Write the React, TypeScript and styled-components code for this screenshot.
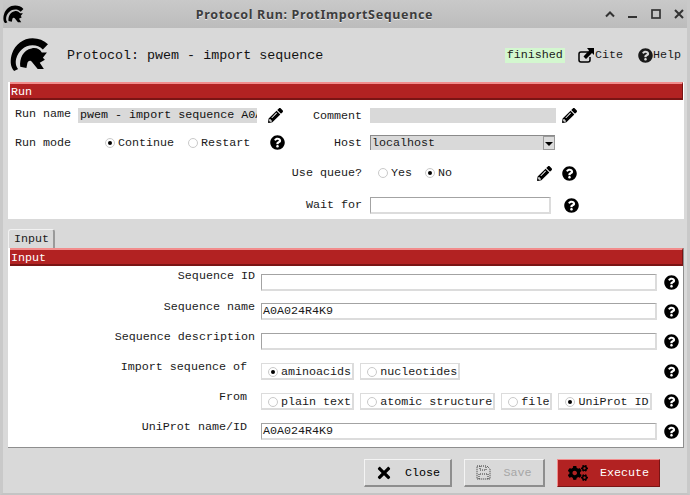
import React from 'react'
import styled, { createGlobalStyle } from 'styled-components'
import { FaCogs, FaPencilAlt, FaQuestionCircle, FaTimes } from 'react-icons/fa'

const mono = `'Liberation Mono', 'DejaVu Sans Mono', monospace`

const GlobalStyle = createGlobalStyle`
  html, body { margin: 0; padding: 0; background: #d9d9d9; }
  * { box-sizing: border-box; }
`

const Helmet = ({ size = 38 }: { size?: number }) => (
  <svg width={size} height={size * 0.9} viewBox='0 0 38 34'>
    <path
      fill='#000'
      d='M4 33 C0 29 0 22 2 16 C5 7 13 1 22 1 C28 1 33 3 37 7 L32 12 C29 9 26 8 22 8 C14 8 8 14 6 21 C5 25 6 29 8 31 Z'
    />
    <path
      fill='#000'
      d='M10 29 C9 21 13 12 21 11 C26 10 29 12 31 15 L36 15 L32 20 L34 22 L29 25 L33 31 L27 31 L22 25 C20 22 18 23 17 25 L16 30 Z'
    />
  </svg>
)

const CiteIcon = () => (
  <svg width='17' height='15' viewBox='0 0 17 15'>
    <path
      fill='none'
      stroke='#000'
      strokeWidth='1.5'
      d='M10 4 H3 Q1 4 1 6 V12 Q1 14 3 14 H10 Q12 14 12 12 V9'
    />
    <path fill='#000' d='M9 0 H16 V7 L14 5 L8 11 L5.5 8.5 L11 2.5 Z' />
  </svg>
)

const SaveIcon = () => (
  <svg width='15' height='15' viewBox='0 0 15 15'>
    <path
      fill='none'
      stroke='#333'
      strokeDasharray='1 1'
      d='M1 1 H11 L14 4 V14 H1 Z M4 1 V5 H10 V1 M3 14 V9 H12 V14'
    />
  </svg>
)

const Chrome = styled.div`
  width: 690px;
  height: 495px;
  display: flex;
  flex-direction: column;
  background: #d9d9d9;
  font-family: ${mono};
  font-size: 11.7px;
  color: #1a1a1a;
  overflow: hidden;
  border-left: 3px solid #c9c9c9;
  border-right: 3px solid #c9c9c9;
  border-bottom: 2px solid #c4c4c4;
`

const TitleBar = styled.div`
  flex: 0 0 28px;
  margin: 0 -3px;
  display: flex;
  align-items: center;
  background: linear-gradient(#c9c9c9, #bcbcbc);
`

const TitleLogo = styled.div`
  width: 26px;
  margin-left: 3px;
  display: flex;
`

const TitleText = styled.div`
  flex: 1;
  text-align: center;
  font-family: 'Noto Sans', 'DejaVu Sans', sans-serif;
  font-size: 12.5px;
  font-weight: 700;
  letter-spacing: 0.65px;
  color: #3d3d3d;
  text-shadow: 0 1px 0 #e8e8e8;
  padding-right: 5px;
`

const TitleButtons = styled.div`
  display: flex;
  align-items: center;
  gap: 13px;
  padding-right: 6px;
`

const Header = styled.div`
  flex: 0 0 54px;
  display: flex;
  align-items: center;
  padding: 0 5px 0 7px;
`

const HeaderLogo = styled.div`
  width: 57px;
  display: flex;
`

const ProtocolTitle = styled.div`
  flex: 1;
  font-size: 13.35px;
  white-space: pre;
  color: #111;
`

const Status = styled.span`
  background: #d3f7cf;
  height: 15px;
  line-height: 15px;
  padding: 0 2px;
  margin-right: 13px;
`

const HeadLink = styled.span`
  display: flex;
  align-items: center;
  margin-right: 15px;
  &:last-child {
    margin-right: 1px;
  }
`

const Panel = styled.div`
  margin-left: 5px;
  background: #fff;
`

const RedBar = styled.div`
  height: 18px;
  margin-left: 2px;
  width: 673px;
  background: #b22222;
  border-top: 2px solid #f28c8c;
  border-bottom: 2px solid #7a1414;
  border-right: 1px solid #7a1414;
  color: #fff;
  line-height: 16px;
  font-size: 11.7px;
  padding-left: 1px;
`

const RunPanel = styled(Panel)`
  height: 137px;
  width: 676px;
`

const RunGrid = styled.div`
  display: grid;
  grid-template-columns: 63px 179px 35px 78px 186px 1fr;
  grid-template-rows: 27px 27px 34px 30px;
  padding: 2px 0 0 7px;
`

const RunLabel = styled.div<{ $raised?: boolean }>`
  display: flex;
  align-items: center;
  white-space: pre;
  padding-bottom: ${(p) => (p.$raised ? '4px' : '0')};
`

const SideLabel = styled(RunLabel)`
  justify-content: flex-end;
  padding-right: 8px;
`

const WideLabel = styled(SideLabel)`
  grid-column: 1 / span 4;
`

const Cell = styled.div<{ $between?: boolean }>`
  display: flex;
  align-items: center;
  justify-content: ${(p) => (p.$between ? 'space-between' : 'flex-start')};
`

const FilledInput = styled.div`
  width: 100%;
  height: 15px;
  background: #d9d9d9;
  line-height: 14px;
  padding-left: 2px;
  white-space: pre;
  overflow: hidden;
  color: #111;
`

const HostSelect = styled.div`
  width: 185px;
  height: 15px;
  background: #d9d9d9;
  border-top: 1px solid #8a8a8a;
  border-left: 1px solid #8a8a8a;
  display: flex;
  justify-content: space-between;
  line-height: 14px;
  padding-left: 1px;
`

const ArrowBox = styled.span`
  width: 12px;
  height: 14px;
  background: #dcdcdc;
  border: 1px solid #9a9a9a;
  display: flex;
  align-items: center;
  justify-content: center;
  &::after {
    content: '';
    border-left: 4px solid transparent;
    border-right: 4px solid transparent;
    border-top: 4px solid #000;
    margin-top: 1px;
  }
`

const TextBox = styled.div<{ $width?: number }>`
  width: ${(p) => (p.$width ? `${p.$width}px` : '100%')};
  height: 17px;
  background: #fff;
  border: 2px solid #dcdcdc;
  border-top: 1px solid #a3a3a3;
  border-left: 1px solid #a3a3a3;
  line-height: 15px;
  padding-left: 1px;
  white-space: pre;
`

const RadioMark = styled.span<{ $on?: boolean }>`
  flex: 0 0 10px;
  width: 10px;
  height: 10px;
  border-radius: 50%;
  background: #fff;
  border: 1px solid #c9c9c9;
  margin-right: 3px;
  display: flex;
  align-items: center;
  justify-content: center;
  &::after {
    content: '';
    display: ${(p) => (p.$on ? 'block' : 'none')};
    width: 4px;
    height: 4px;
    border-radius: 50%;
    background: #000;
  }
`

const RadioGroup = styled.div<{ $indent: number; $gap: number }>`
  display: flex;
  align-items: center;
  padding-left: ${(p) => p.$indent}px;
  gap: ${(p) => p.$gap}px;
`

const Radio = styled.span`
  display: inline-flex;
  align-items: center;
  white-space: pre;
`

const BoxedRadio = styled.span`
  display: inline-flex;
  align-items: center;
  height: 17px;
  padding: 1px 1px 0 6px;
  border: 1px solid #dcdcdc;
  border-width: 1px 2px 2px 1px;
  white-space: pre;
`

const RadioRow = styled.div`
  display: flex;
  gap: 6px;
`

const IconSlot = styled.span<{ $ml?: number; $mr?: number }>`
  display: inline-flex;
  margin-left: ${(p) => p.$ml ?? 0}px;
  margin-right: ${(p) => p.$mr ?? 0}px;
`

const TabStrip = styled.div`
  margin-top: 10px;
  height: 19px;
  padding-left: 5px;
  display: flex;
`

const Tab = styled.div`
  width: 47px;
  height: 20px;
  border: 1px solid #f2f2f2;
  border-bottom: none;
  border-right: 2px solid #9a9a9a;
  border-top-left-radius: 3px;
  border-top-right-radius: 3px;
  padding-left: 5px;
  line-height: 19px;
  background: #d9d9d9;
`

const InputPanel = styled(Panel)`
  height: 200px;
  width: 676px;
  border-bottom: 1px solid #8e8e8e;
  border-right: 1px solid #8e8e8e;
`

const InputGrid = styled.div`
  display: grid;
  grid-template-columns: 253px 396px 1fr;
  grid-template-rows: 29px repeat(5, 30px);
`

const FieldLabel = styled.div<{ $inset?: boolean }>`
  text-align: right;
  padding-right: ${(p) => (p.$inset ? '14px' : '6px')};
  white-space: pre;
  line-height: 14px;
  padding-top: 5px;
  &:first-child {
    padding-top: 3px;
  }
`

const FieldValue = styled.div`
  display: flex;
  align-items: flex-start;
  padding-top: 8px;
`

const HelpCell = styled.div`
  padding: 9px 0 0 7px;
  display: flex;
`

const Footer = styled.div`
  flex: 1;
  display: flex;
  justify-content: flex-end;
  align-items: flex-start;
  gap: 12px;
  padding: 11px 27px 0 0;
`

const ActionButton = styled.div<{ $w: number; $kind?: 'primary' | 'disabled' }>`
  width: ${(p) => p.$w}px;
  height: 28px;
  display: flex;
  align-items: center;
  justify-content: center;
  gap: 12px;
  background: ${(p) => (p.$kind === 'primary' ? '#b22222' : '#d9d9d9')};
  color: ${(p) => (p.$kind === 'primary' ? '#fff' : p.$kind === 'disabled' ? '#a6a6a6' : '#000')};
  border: 1px solid;
  border-color: ${(p) =>
    p.$kind === 'primary'
      ? '#f28c8c #7a1414 #7a1414 #f28c8c'
      : '#f4f4f4 #8e8e8e #8e8e8e #f4f4f4'};
  border-width: ${(p) => (p.$kind === 'primary' ? '1px' : '1px 2px 2px 1px')};
`

const Help = ({ ml }: { ml?: number }) => (
  <IconSlot $ml={ml}>
    <FaQuestionCircle size={15} color='#000' />
  </IconSlot>
)

const Pencil = ({ ml, mr }: { ml?: number; mr?: number }) => (
  <IconSlot $ml={ml} $mr={mr}>
    <FaPencilAlt size={15} color='#000' />
  </IconSlot>
)

const Option = ({ on, label }: { on?: boolean; label: string }) => (
  <BoxedRadio>
    <RadioMark $on={on} />
    {label}
  </BoxedRadio>
)

const fields = [
  { label: 'Sequence ID', value: '' },
  { label: 'Sequence name', value: 'A0A024R4K9' },
  { label: 'Sequence description', value: '' }
]

const App = () => (
  <>
    <GlobalStyle />
    <Chrome>
      <TitleBar>
        <TitleLogo>
          <Helmet size={21} />
        </TitleLogo>
        <TitleText>Protocol Run: ProtImportSequence</TitleText>
        <TitleButtons>
          <svg width='10' height='8' viewBox='0 0 10 8'>
            <path d='M1 6.5 L5 2.5 L9 6.5' fill='none' stroke='#333' strokeWidth='2' />
          </svg>
          <svg width='10' height='10' viewBox='0 0 10 10'>
            <rect x='0' y='7' width='9' height='2' fill='#333' />
          </svg>
          <svg width='10' height='10' viewBox='0 0 10 10'>
            <rect x='1' y='1' width='8' height='8' fill='none' stroke='#333' strokeWidth='1.7' />
          </svg>
          <svg width='10' height='10' viewBox='0 0 10 10'>
            <path d='M1 1 L9 9 M9 1 L1 9' stroke='#333' strokeWidth='2' />
          </svg>
        </TitleButtons>
      </TitleBar>

      <Header>
        <HeaderLogo>
          <Helmet size={39} />
        </HeaderLogo>
        <ProtocolTitle>Protocol: pwem - import sequence</ProtocolTitle>
        <Status>finished</Status>
        <HeadLink>
          <CiteIcon />
          Cite
        </HeadLink>
        <HeadLink>
          <FaQuestionCircle size={15} />
          Help
        </HeadLink>
      </Header>

      <RunPanel>
        <RedBar>Run</RedBar>
        <RunGrid>
          <RunLabel $raised>Run name</RunLabel>
          <Cell>
            <FilledInput>pwem - import sequence A0A024R4K9</FilledInput>
          </Cell>
          <Cell>
            <Pencil ml={11} />
          </Cell>
          <SideLabel>Comment</SideLabel>
          <Cell>
            <FilledInput />
          </Cell>
          <Cell>
            <Pencil ml={6} />
          </Cell>

          <RunLabel>Run mode</RunLabel>
          <Cell>
            <RadioGroup $indent={27} $gap={14}>
              <Radio>
                <RadioMark $on />
                Continue
              </Radio>
              <Radio>
                <RadioMark />
                Restart
              </Radio>
            </RadioGroup>
          </Cell>
          <Cell>
            <Help ml={13} />
          </Cell>
          <SideLabel>Host</SideLabel>
          <Cell>
            <HostSelect>
              localhost
              <ArrowBox />
            </HostSelect>
          </Cell>
          <Cell />

          <WideLabel>Use queue?</WideLabel>
          <Cell $between>
            <RadioGroup $indent={8} $gap={13}>
              <Radio>
                <RadioMark />
                Yes
              </Radio>
              <Radio>
                <RadioMark $on />
                No
              </Radio>
            </RadioGroup>
            <Pencil mr={4} />
          </Cell>
          <Cell>
            <Help ml={6} />
          </Cell>

          <WideLabel>Wait for</WideLabel>
          <Cell>
            <TextBox $width={181} />
          </Cell>
          <Cell>
            <Help ml={8} />
          </Cell>
        </RunGrid>
      </RunPanel>

      <TabStrip>
        <Tab>Input</Tab>
      </TabStrip>

      <InputPanel>
        <RedBar>Input</RedBar>
        <InputGrid>
          {fields.map((f) => (
            <React.Fragment key={f.label}>
              <FieldLabel>{f.label}</FieldLabel>
              <FieldValue>
                <TextBox>{f.value}</TextBox>
              </FieldValue>
              <HelpCell>
                <Help />
              </HelpCell>
            </React.Fragment>
          ))}
          <FieldLabel $inset>Import sequence of</FieldLabel>
          <FieldValue>
            <RadioRow>
              <Option on label='aminoacids' />
              <Option label='nucleotides' />
            </RadioRow>
          </FieldValue>
          <HelpCell>
            <Help />
          </HelpCell>
          <FieldLabel $inset>From</FieldLabel>
          <FieldValue>
            <RadioRow>
              <Option label='plain text' />
              <Option label='atomic structure' />
              <Option label='file' />
              <Option on label='UniProt ID' />
            </RadioRow>
          </FieldValue>
          <HelpCell>
            <Help />
          </HelpCell>
          <FieldLabel $inset>UniProt name/ID</FieldLabel>
          <FieldValue>
            <TextBox>A0A024R4K9</TextBox>
          </FieldValue>
          <HelpCell>
            <Help />
          </HelpCell>
        </InputGrid>
      </InputPanel>

      <Footer>
        <ActionButton $w={88}>
          <FaTimes size={18} />
          Close
        </ActionButton>
        <ActionButton $w={81} $kind='disabled'>
          <SaveIcon />
          Save
        </ActionButton>
        <ActionButton $w={103} $kind='primary'>
          <FaCogs size={20} color='#000' />
          Execute
        </ActionButton>
      </Footer>
    </Chrome>
  </>
)

export default App
